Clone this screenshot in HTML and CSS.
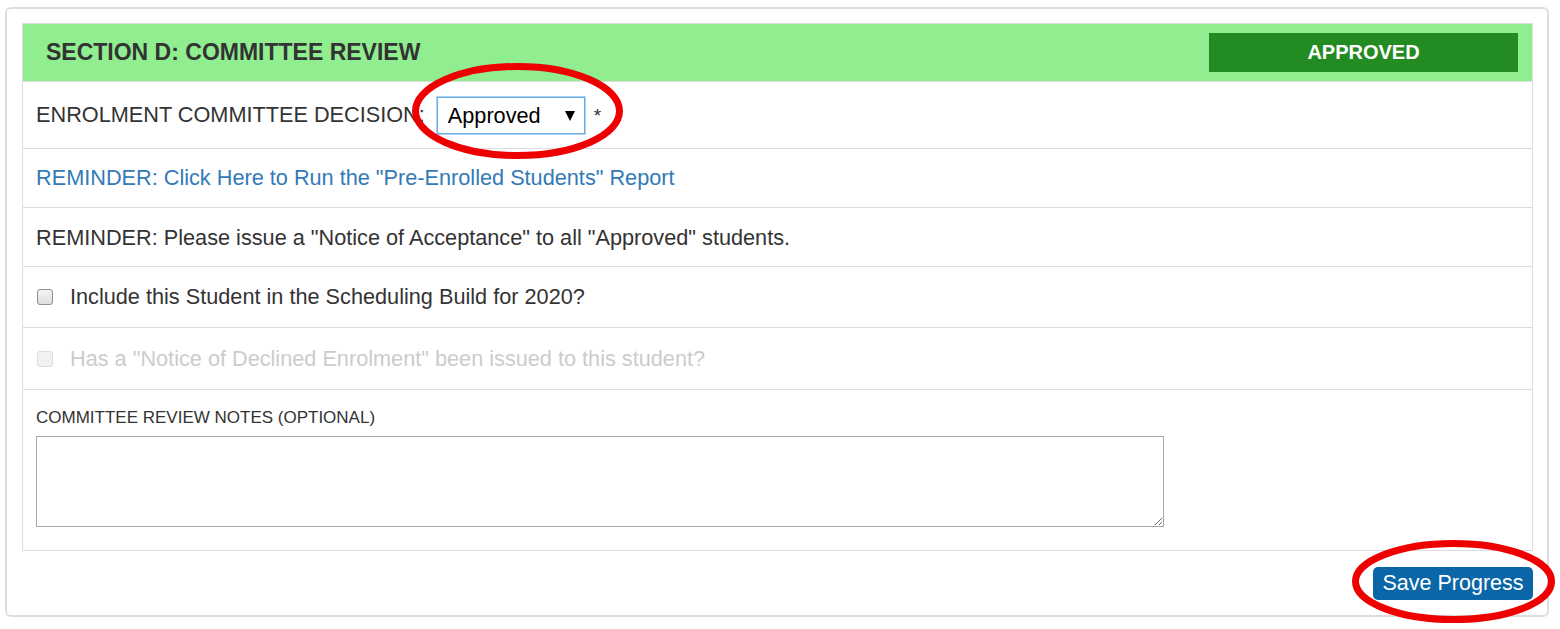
FILE: index.html
```html
<!DOCTYPE html>
<html lang="en">
<head>
<meta charset="utf-8">
<title>Committee Review</title>
<link rel="stylesheet" href="styles.css">
</head>
<body>
<div class="outer">
  <div class="panel">
    <div class="panel-heading">
      <h4 class="panel-title">SECTION D: COMMITTEE REVIEW</h4>
      <div class="status-badge">APPROVED</div>
    </div>
    <div class="row row-decision">
      <label class="decision-label" for="decision">ENROLMENT COMMITTEE DECISION:</label>
      <span class="select-wrap">
        <select id="decision" class="decision-select">
          <option>Approved</option>
          <option>Declined</option>
          <option>Pending</option>
        </select>
      </span>
      <span class="required">*</span>
    </div>
    <div class="row row-text">
      <a class="report-link" href="#">REMINDER: Click Here to Run the "Pre-Enrolled Students" Report</a>
    </div>
    <div class="row row-text row-text-2">
      <span>REMINDER: Please issue a "Notice of Acceptance" to all "Approved" students.</span>
    </div>
    <div class="row row-check">
      <input type="checkbox" id="include" class="check">
      <label for="include" class="check-label">Include this Student in the Scheduling Build for 2020?</label>
    </div>
    <div class="row row-check row-check-2 disabled">
      <input type="checkbox" id="declined" class="check" disabled>
      <label for="declined" class="check-label">Has a "Notice of Declined Enrolment" been issued to this student?</label>
    </div>
    <div class="row row-notes">
      <label class="notes-label" for="notes">COMMITTEE REVIEW NOTES (OPTIONAL)</label>
      <textarea id="notes" class="notes"></textarea>
    </div>
  </div>
  <div class="footer">
    <button class="btn-save" type="button">Save Progress</button>
  </div>
</div>
<svg class="annotations" width="1560" height="629" viewBox="0 0 1560 629" aria-hidden="true">
  <ellipse cx="517.5" cy="111" rx="102" ry="44.5" fill="none" stroke="#ee0000" stroke-width="7"/>
  <ellipse cx="1453.5" cy="581.5" rx="98" ry="38" fill="none" stroke="#ee0000" stroke-width="7"/>
</svg>
</body>
</html>
```
FILE: styles.css
```css
* { box-sizing: border-box; }

html, body {
  margin: 0;
  padding: 0;
  background: #ffffff;
}

body {
  position: relative;
  width: 1560px;
  height: 629px;
  overflow: hidden;
  font-family: "Liberation Sans", Arial, Helvetica, sans-serif;
  font-size: 21.7px;
  color: #333333;
}

.outer {
  margin: 7px 0 0 5px;
  width: 1544px;
  border: 2px solid #dddddd;
  border-radius: 6px;
  padding: 14px 14px 15px 15px;
}

.panel {
  border: 1px solid #dddddd;
  display: flex;
  flex-direction: column;
}

.panel-heading {
  height: 57px;
  background: #90ee90;
  display: flex;
  align-items: center;
  justify-content: space-between;
  padding: 0 14px 0 23px;
}

.panel-title {
  margin: 0;
  font-size: 23px;
  font-weight: 700;
  color: #333333;
}

.status-badge {
  width: 309px;
  height: 39px;
  background: #228b22;
  color: #ffffff;
  font-weight: 700;
  font-size: 20px;
  display: flex;
  align-items: center;
  justify-content: center;
}

.row {
  border-top: 1px solid #dddddd;
  display: flex;
  align-items: center;
  padding: 0 13px;
}

.row-decision { height: 67px; }
.row-text { height: 59px; }
.row-text-2 { padding-top: 2px; }
.row-check { height: 61px; }
.row-check-2 { height: 62px; }

.decision-label {
  margin-right: 12px;
}

.select-wrap {
  position: relative;
  display: inline-block;
  margin-top: 1px;
}

.decision-select {
  -webkit-appearance: none;
  appearance: none;
  width: 148px;
  height: 37px;
  border: 1px solid #66afe9;
  box-shadow: 0 0 0 1px rgba(102, 175, 233, 0.55);
  border-radius: 0;
  background: #ffffff;
  font-family: "Liberation Sans", Arial, sans-serif;
  font-size: 21.7px;
  color: #000000;
  padding: 0 0 0 10px;
  outline: none;
}

.select-wrap::after {
  content: "";
  position: absolute;
  right: 10px;
  top: 14px;
  border-left: 5px solid transparent;
  border-right: 5px solid transparent;
  border-top: 10px solid #000000;
  pointer-events: none;
}

.required {
  margin-left: 9px;
  margin-top: 2px;
  font-size: 19px;
}

.report-link {
  color: #337ab7;
  text-decoration: none;
}

.check {
  -webkit-appearance: none;
  appearance: none;
  width: 16px;
  height: 16px;
  margin: 0 17px 0 1px;
  border: 1px solid #8e8f8f;
  border-radius: 3px;
  background: linear-gradient(#f4f4f4, #dedede);
  flex: none;
}

.disabled .check {
  border-color: #dcdcdc;
  background: #f1f1f1;
}

.disabled .check-label {
  color: #cccccc;
}

.row-notes {
  height: 161px;
  flex-direction: column;
  align-items: flex-start;
  padding-top: 18px;
}

.notes-label {
  font-size: 17px;
  line-height: 20px;
  margin-bottom: 8px;
}

.notes {
  display: block;
  width: 1128px;
  height: 91px;
  border: 1px solid #a9a9a9;
  margin: 0;
  font-family: "Liberation Sans", Arial, sans-serif;
  font-size: 18px;
}

.footer {
  display: flex;
  justify-content: flex-end;
  padding-top: 16px;
}

.btn-save {
  width: 160px;
  height: 33px;
  border: none;
  border-radius: 5px;
  background: #0b66a8;
  color: #ffffff;
  font-family: "Liberation Sans", Arial, sans-serif;
  font-size: 21.5px;
  padding: 0;
}

.annotations {
  position: absolute;
  top: 0;
  left: 0;
  pointer-events: none;
}
```
